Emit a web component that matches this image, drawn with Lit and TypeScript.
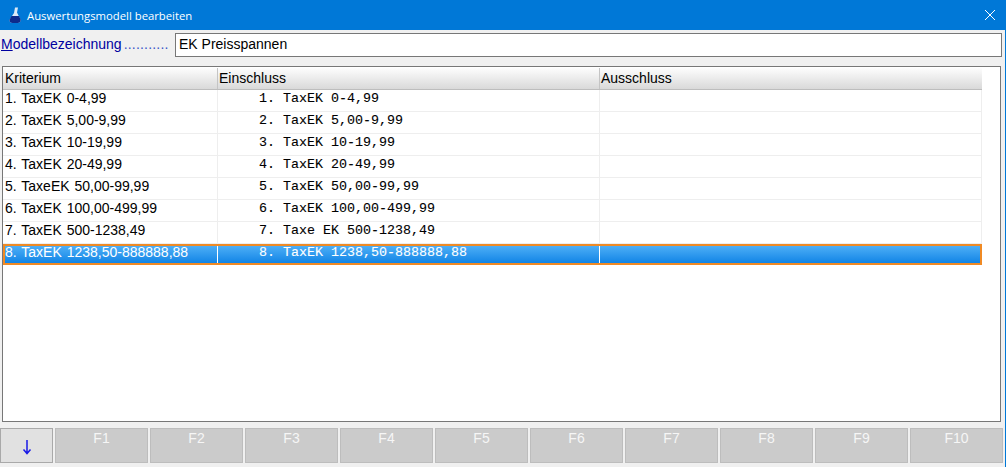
import { LitElement, html, css } from "lit";
import { customElement } from "lit/decorators.js";

const rows: [string, string][] = [
  ["1. TaxEK 0-4,99", "1. TaxEK 0-4,99"],
  ["2. TaxEK 5,00-9,99", "2. TaxEK 5,00-9,99"],
  ["3. TaxEK 10-19,99", "3. TaxEK 10-19,99"],
  ["4. TaxEK 20-49,99", "4. TaxEK 20-49,99"],
  ["5. TaxeEK 50,00-99,99", "5. TaxEK 50,00-99,99"],
  ["6. TaxEK 100,00-499,99", "6. TaxEK 100,00-499,99"],
  ["7. TaxEK 500-1238,49", "7. Taxe EK 500-1238,49"],
  ["8. TaxEK 1238,50-888888,88", "8. TaxEK 1238,50-888888,88"],
];
const keys = ["F1", "F2", "F3", "F4", "F5", "F6", "F7", "F8", "F9", "F10"];

@customElement("app-root")
export class AppRoot extends LitElement {
  static styles = css`
    :host { display: block; width: 1006px; height: 467px; background: #f0f0f0; font-family: "Liberation Sans", Arial, sans-serif; overflow: hidden; box-sizing: border-box; border-right: 1px solid #0078d7; }
    .title { height: 30px; background: #0078d7; display: flex; align-items: center; color: #fff; padding-left: 8px; margin-right: -1px; }
    .title svg.flask { width: 14px; height: 18px; margin-right: 5px; flex: none; }
    .title span { flex: 1; font-family: "Open Sans", "Noto Sans", sans-serif; font-size: 11.3px; }
    .close { width: 12px; height: 12px; margin-right: 10px; flex: none; }
    .model { height: 24px; margin-top: 3px; display: flex; align-items: center; padding-left: 1px; }
    .label { width: 174px; flex: none; font-size: 14px; line-height: 16px; padding-bottom: 2px; color: #0000a0; display: flex; align-items: baseline; white-space: nowrap; }
    .dots { margin-left: 2px; letter-spacing: 0.2px; font-size: 14px; color: #3a56c8; }
    .input { width: 827px; height: 24px; box-sizing: border-box; border: 1px solid #777; background: #fff; font-size: 14px; padding-left: 3px; line-height: 20px; color: #000; }
    .grid { margin: 9px 4px 0 2px; height: 356px; box-sizing: border-box; border: 1px solid #777; background: #fff; padding-top: 1px; }
    .hdr, .row { display: grid; grid-template-columns: 214px 382px 382px; width: 979px; box-sizing: border-box; padding-left: 1px; }
    .hdr { height: 22px; background: linear-gradient(#fdfdfd, #d9d9d9); border-bottom: 1px solid #bdbdbd; font-size: 14px; line-height: 21px; }
    .hdr div { padding-left: 1px; border-right: 1px solid #c4c4c4; color: #000; }
    .hdr div:last-child { border-right: none; }
    .row { height: 22px; border-bottom: 1px solid #eee; font-size: 14px; word-spacing: 1px; line-height: 17px; color: #000; }
    .row > div { border-right: 1px solid #eee; padding-left: 1px; white-space: pre; }
    .mono { font-family: "Liberation Mono", "Courier New", monospace; font-size: 13.33px; word-spacing: 0; padding-left: 41px !important; line-height: 18px; -webkit-text-stroke: 0.1px currentColor; }
    .row.sel { background: linear-gradient(#55b3f8, #0a80e4); color: #fff; outline: 2px solid #f08a24; outline-offset: -2px; border-bottom: none; line-height: 16px; height: 21px; }
    .row.sel > div { border-right: 1px solid #fff; }
    .keys { display: flex; gap: 2px; margin-top: 6px; height: 35px; }
    .key { box-sizing: border-box; width: 93px; height: 35px; background: #cbcbcb; border: 1px solid #bdbdbd; color: #f6f6f6; font-size: 14px; text-align: center; line-height: 18px; }
    .key.first { width: 53px; background: #e1e1e1; border-color: #a9a9a9; display: flex; align-items: center; justify-content: center; }
    .key.first svg { width: 10px; height: 16px; margin-top: 3px; }
  `;
  render() {
    return html`
      <div class="title">
        <svg class="flask" viewBox="0 0 14 18"><path d="M7 1.500h3l-1 5 3.500 7c.6 2-1 3.500-3 3.500H4.500c-2 0-3.500-1.500-2.800-3.500L6 7z" fill="#dbe9f7"/><path d="M3.500 10h7.500l1.600 3.500c.4 2-1 3.500-3 3.500H4.500c-2 0-3.500-1.500-2.800-3.500z" fill="#0d2a8c"/></svg>
        <span>Auswertungsmodell bearbeiten</span>
        <svg class="close" viewBox="0 0 12 12"><path d="M1 1l10 10M11 1L1 11" stroke="#fff" stroke-width="1" fill="none"/></svg>
      </div>
      <div class="model">
        <div class="label"><span><u>M</u>odellbezeichnung</span><span class="dots">...........</span></div>
        <div class="input">EK Preisspannen</div>
      </div>
      <div class="grid">
        <div class="hdr"><div>Kriterium</div><div>Einschluss</div><div>Ausschluss</div></div>
        ${rows.map((r, i) => html`<div class="row ${i === 7 ? "sel" : ""}"><div>${r[0]}</div><div class="mono">${r[1]}</div><div></div></div>`)}
      </div>
      <div class="keys">
        <div class="key first"><svg viewBox="0 0 10 16"><path d="M5 1v13M1.500 10.500L5 14.500l3.500-4" stroke="#1a1ae6" stroke-width="1.500" fill="none"/></svg></div>
        ${keys.map((k) => html`<div class="key">${k}</div>`)}
      </div>
    `;
  }
}
